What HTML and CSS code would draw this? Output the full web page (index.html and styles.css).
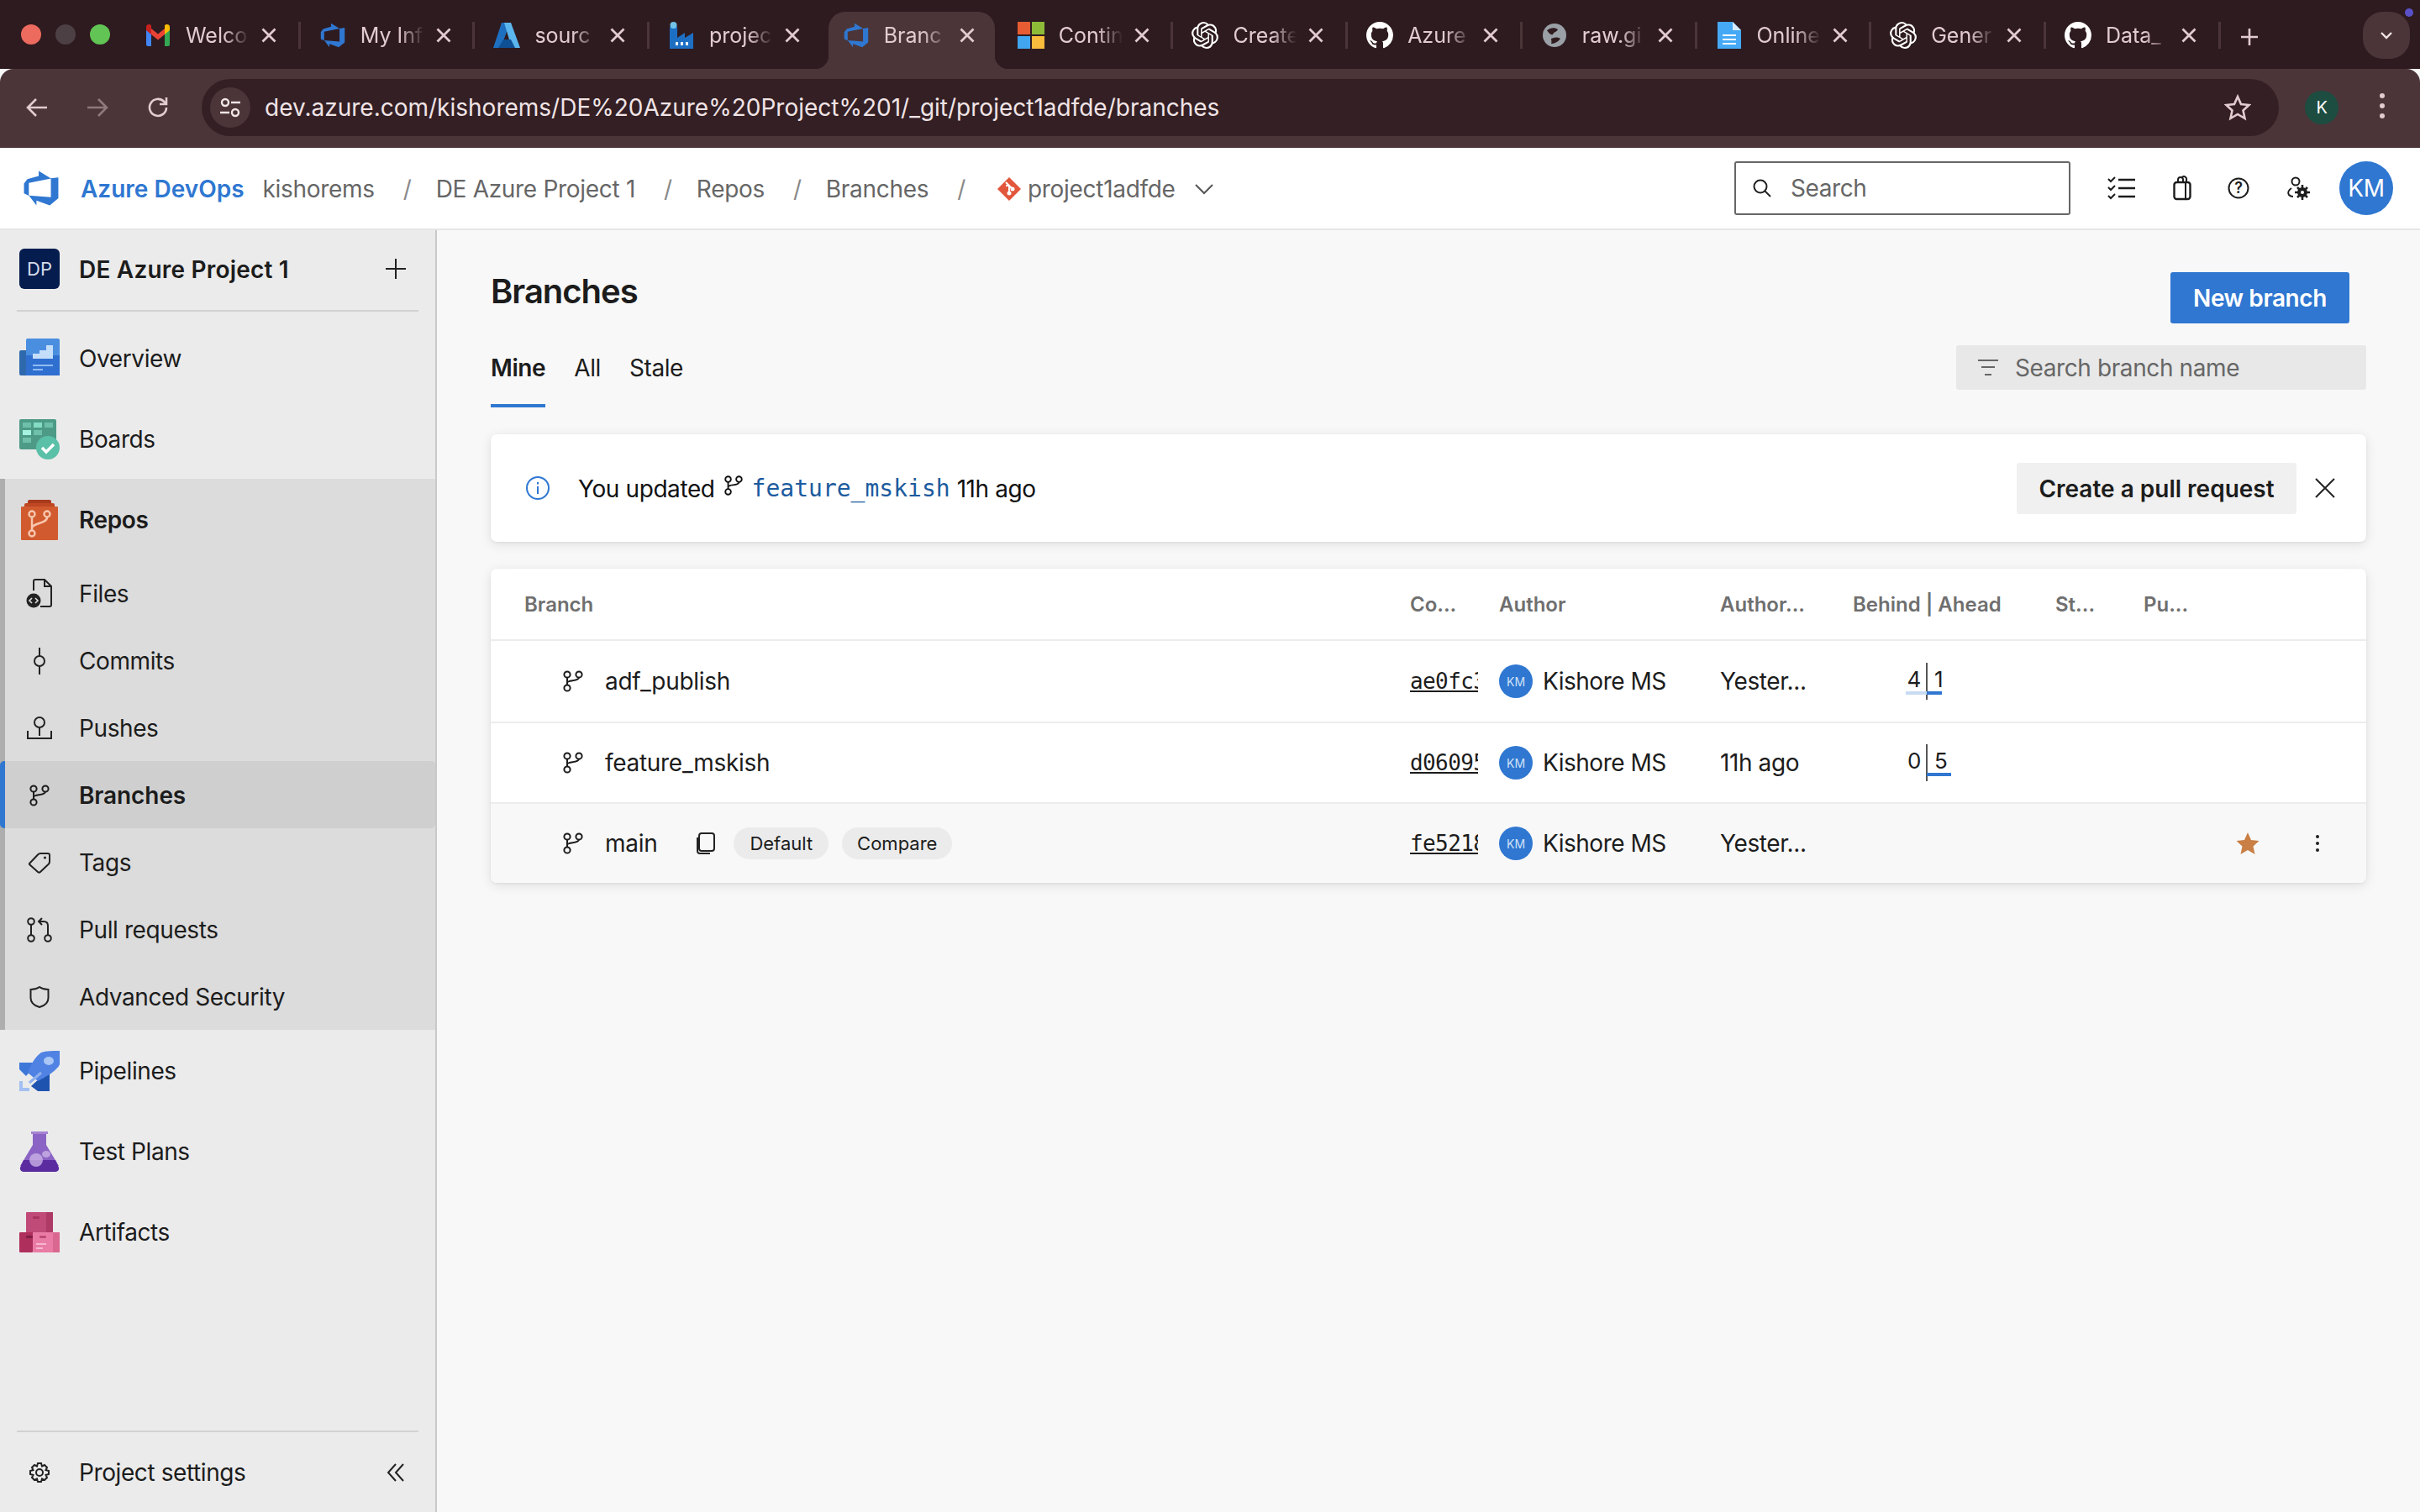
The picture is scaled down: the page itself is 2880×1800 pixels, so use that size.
FILE: index.html
```html
<!DOCTYPE html>
<html lang="en">

<head>
    <meta charset="UTF-8">
    <title>Branches</title>
    <link rel="stylesheet" href="styles.css">
</head>

<body>
    <svg class="sprite" xmlns="http://www.w3.org/2000/svg">
        <symbol id="i-ado" viewBox="0 0 18 18">
            <path fill="#2f77d1" d="M17 4v9.74l-4 3.28-6.2-2.26V17l-3.51-4.59 10.23.8V4.44zm-3.41.49L7.85 1v2.29L2.58 4.84 1 6.87v4.61l2.26 1V6.57z" />
        </symbol>
        <symbol id="i-github" viewBox="0 0 16 16">
            <path fill="#fff" d="M8 0C3.58 0 0 3.58 0 8c0 3.54 2.29 6.53 5.47 7.59.4.07.55-.17.55-.38 0-.19-.01-.82-.01-1.49-2.01.37-2.53-.49-2.69-.94-.09-.23-.48-.94-.82-1.13-.28-.15-.68-.52-.01-.53.63-.01 1.08.58 1.23.82.72 1.21 1.87.87 2.33.66.07-.52.28-.87.51-1.07-1.78-.2-3.64-.89-3.64-3.95 0-.87.31-1.59.82-2.15-.08-.2-.36-1.02.08-2.12 0 0 .67-.21 2.2.82.64-.18 1.32-.27 2-.27.68 0 1.36.09 2 .27 1.53-1.04 2.2-.82 2.2-.82.44 1.1.16 1.92.08 2.12.51.56.82 1.27.82 2.15 0 3.07-1.87 3.75-3.65 3.95.29.25.54.73.54 1.48 0 1.07-.01 1.93-.01 2.2 0 .21.15.46.55.38A8.013 8.013 0 0016 8c0-4.42-3.58-8-8-8z" />
        </symbol>
        <symbol id="i-gpt" viewBox="0 0 24 24">
            <path fill="#fff" d="M22.2819 9.8211a5.9847 5.9847 0 0 0-.5157-4.9108 6.0462 6.0462 0 0 0-6.5098-2.9A6.0651 6.0651 0 0 0 4.9807 4.1818a5.9847 5.9847 0 0 0-3.9977 2.9 6.0462 6.0462 0 0 0 .7427 7.0966 5.98 5.98 0 0 0 .511 4.9107 6.051 6.051 0 0 0 6.5146 2.9001A5.9847 5.9847 0 0 0 13.2599 24a6.0557 6.0557 0 0 0 5.7718-4.2058 5.9894 5.9894 0 0 0 3.9977-2.9001 6.0557 6.0557 0 0 0-.7475-7.0729zm-9.022 12.6081a4.4755 4.4755 0 0 1-2.8764-1.0408l.1419-.0804 4.7783-2.7582a.7948.7948 0 0 0 .3927-.6813v-6.7369l2.02 1.1686a.071.071 0 0 1 .038.052v5.5826a4.504 4.504 0 0 1-4.4945 4.4944zm-9.6607-4.1254a4.4708 4.4708 0 0 1-.5346-3.0137l.142.0852 4.783 2.7582a.7712.7712 0 0 0 .7806 0l5.8428-3.3685v2.3324a.0804.0804 0 0 1-.0332.0615L9.74 19.9502a4.4992 4.4992 0 0 1-6.1408-1.6464zM2.3408 7.8956a4.485 4.485 0 0 1 2.3655-1.9728V11.6a.7664.7664 0 0 0 .3879.6765l5.8144 3.3543-2.0201 1.1685a.0757.0757 0 0 1-.071 0l-4.8303-2.7865A4.504 4.504 0 0 1 2.3408 7.872zm16.5963 3.8558L13.1038 8.364 15.1192 7.2a.0757.0757 0 0 1 .071 0l4.8303 2.7913a4.4944 4.4944 0 0 1-.6765 8.1042v-5.6772a.79.79 0 0 0-.407-.667zm2.0107-3.0231l-.142-.0852-4.7735-2.7818a.7759.7759 0 0 0-.7854 0L9.409 9.2297V6.8974a.0662.0662 0 0 1 .0284-.0615l4.8303-2.7866a4.4992 4.4992 0 0 1 6.6802 4.66zM8.3065 12.863l-2.02-1.1638a.0804.0804 0 0 1-.038-.0567V6.0742a4.4992 4.4992 0 0 1 7.3757-3.4537l-.142.0805L8.704 5.459a.7948.7948 0 0 0-.3927.6813zm1.0976-2.3654l2.602-1.4998 2.6069 1.4998v2.9994l-2.5974 1.4997-2.6067-1.4997Z" />
        </symbol>
        <symbol id="i-close" viewBox="0 0 18 18">
            <path d="M1.500 1.500l15 15M16.500 1.500l-15 15" fill="none" stroke="#e3ccd0" stroke-width="2.800" />
        </symbol>
        <symbol id="i-branch" viewBox="0 0 26 26">
            <g fill="none" stroke="currentColor" stroke-width="2">
                <circle cx="6" cy="5" r="3.6" />
                <circle cx="20" cy="5" r="3.6" />
                <circle cx="6" cy="21" r="3.6" />
                <path d="M6 8.6v8.8M20 8.6c0 5-14 2.5-14 6.4" />
            </g>
        </symbol>
    </svg>

    <div class="tabstrip">
        <div class="lights">
            <span class="light red"></span>
            <span class="light grey"></span>
            <span class="light green"></span>
        </div>
        <div class="tab sep">
            <svg class="favicon" viewBox="0 0 32 32">
                <path fill="#4285f4" d="M2 6h6v23H4a2 2 0 0 1-2-2z" />
                <path fill="#34a853" d="M24 6h6v21a2 2 0 0 1-2 2h-4z" />
                <path fill="#ea4335" d="M8 8l8 6.500 8-6.500v7l-8 6.500-8-6.500z" />
                <path fill="#c5221f" d="M2 6c0-3 3.500-4 6-2v11l-6-5z" />
                <path fill="#fbbc04" d="M24 4c2.500-2 6-1 6 2v4l-6 5z" />
            </svg>
            <span class="tab-title">Welco</span>
            <svg class="tab-close"><use href="#i-close" /></svg>
        </div>
        <div class="tab sep">
            <svg class="favicon"><use href="#i-ado" /></svg>
            <span class="tab-title">My Inf</span>
            <svg class="tab-close"><use href="#i-close" /></svg>
        </div>
        <div class="tab sep">
            <svg class="favicon" viewBox="0 0 32 32">
                <path fill="#1e6fc0" d="M10 1h10L9 31H0z" />
                <path fill="#5cb6ee" d="M13 1h8l11 30H22z" />
                <path fill="#0f4f94" d="M12 21h9l5 10H6z" />
            </svg>
            <span class="tab-title">sourc</span>
            <svg class="tab-close"><use href="#i-close" /></svg>
        </div>
        <div class="tab">
            <svg class="favicon" viewBox="0 0 32 32">
                <path fill="#1d6fc4" d="M2 6h9v13l9-6v6l10-6v19H2z" />
                <circle cx="6.500" cy="4" r="4" fill="#6fc3e8" />
                <path fill="#fff" d="M9 24h3v4H9zM15 24h3v4h-3zM21 24h3v4h-3z" />
            </svg>
            <span class="tab-title">projec</span>
            <svg class="tab-close"><use href="#i-close" /></svg>
        </div>
        <div class="tab tab-active">
            <svg class="favicon"><use href="#i-ado" /></svg>
            <span class="tab-title">Branc</span>
            <svg class="tab-close"><use href="#i-close" /></svg>
        </div>
        <div class="tab sep">
            <svg class="favicon" viewBox="0 0 32 32">
                <path fill="#e85c33" d="M0 0h15v15H0z" />
                <path fill="#8dbb37" d="M17 0h15v15H17z" />
                <path fill="#42a5f0" d="M0 17h15v15H0z" />
                <path fill="#f9bc3c" d="M17 17h15v15H17z" />
            </svg>
            <span class="tab-title">Contin</span>
            <svg class="tab-close"><use href="#i-close" /></svg>
        </div>
        <div class="tab sep">
            <svg class="favicon"><use href="#i-gpt" /></svg>
            <span class="tab-title">Create</span>
            <svg class="tab-close"><use href="#i-close" /></svg>
        </div>
        <div class="tab sep">
            <svg class="favicon"><use href="#i-github" /></svg>
            <span class="tab-title">Azure</span>
            <svg class="tab-close"><use href="#i-close" /></svg>
        </div>
        <div class="tab sep">
            <svg class="favicon" viewBox="0 0 32 32">
                <circle cx="16" cy="16" r="14" fill="#9aa0a6" />
                <path fill="#2f1b1f" d="M7 10c4-3 9-4 13-1-1 3-5 3-6 6-3 1-5-2-7-5zM12 20c4-2 8-2 11 0-3 4-7 6-11 6 1-2 0-4 0-6z" />
            </svg>
            <span class="tab-title">raw.gi</span>
            <svg class="tab-close"><use href="#i-close" /></svg>
        </div>
        <div class="tab sep">
            <svg class="favicon" viewBox="0 0 32 32">
                <path fill="#45a9f5" d="M2 0h18l10 10v22H2z" />
                <path fill="#d6ecfc" d="M20 0l10 10H20z" />
                <path fill="#fff" d="M8 15h16v2H8zM8 20h16v2H8zM8 25h16v2H8z" />
            </svg>
            <span class="tab-title">Online</span>
            <svg class="tab-close"><use href="#i-close" /></svg>
        </div>
        <div class="tab sep">
            <svg class="favicon"><use href="#i-gpt" /></svg>
            <span class="tab-title">Gener</span>
            <svg class="tab-close"><use href="#i-close" /></svg>
        </div>
        <div class="tab sep">
            <svg class="favicon"><use href="#i-github" /></svg>
            <span class="tab-title">Data_</span>
            <svg class="tab-close"><use href="#i-close" /></svg>
        </div>
        <svg class="tab-new" viewBox="0 0 24 24">
            <path d="M12 2v20M2 12h20" stroke="#e3ccd0" stroke-width="2.600" />
        </svg>
        <div class="tab-menu">
            <svg viewBox="0 0 16 10" width="16" height="10">
                <path d="M2 2l6 6 6-6" fill="none" stroke="#f0e4e6" stroke-width="2.400" />
            </svg>
            <span class="tab-dot"></span>
        </div>
    </div>

    <div class="toolbar">
        <svg class="nav-icon" viewBox="0 0 28 28">
            <path d="M26 14H4M13 4L3 14l10 10" fill="none" stroke="#e3ccd0" stroke-width="2.600" />
        </svg>
        <svg class="nav-icon" viewBox="0 0 28 28">
            <path d="M2 14h22M15 4l10 10-10 10" fill="none" stroke="#8f7a7e" stroke-width="2.600" />
        </svg>
        <svg class="nav-icon" viewBox="0 0 28 28">
            <path d="M24 14a10 10 0 1 1-3-7.200L24 10M24 2v8h-8" fill="none" stroke="#e3ccd0" stroke-width="2.600" />
        </svg>
        <div class="omnibox">
            <span class="site-chip">
                <svg viewBox="0 0 28 28" width="28" height="28">
                    <g fill="none" stroke="#f0e4e6" stroke-width="2.400">
                        <circle cx="8" cy="8" r="4" />
                        <circle cx="20" cy="20" r="4" />
                        <path d="M15 8h11M2 20h11" />
                    </g>
                </svg>
            </span>
            <span class="url">dev.azure.com/kishorems/DE%20Azure%20Project%201/_git/project1adfde/branches</span>
            <svg class="url-star" viewBox="0 0 32 32">
                <path d="M16 3l4 9 9.500 1-7 6.500 2 9.500-8.500-5-8.500 5 2-9.500-7-6.500 9.500-1z" fill="none" stroke="#e3ccd0" stroke-width="2.600" />
            </svg>
        </div>
        <span class="profile">K</span>
        <span class="kebab-chrome"><i></i><i></i><i></i></span>
    </div>

    <header class="topbar">
        <svg class="ado-logo"><use href="#i-ado" /></svg>
        <span class="brand">Azure DevOps</span>
        <nav class="crumbs">
            <span class="crumb crumb-org">kishorems</span>
            <span class="slash">/</span>
            <span class="crumb">DE Azure Project 1</span>
            <span class="slash">/</span>
            <span class="crumb">Repos</span>
            <span class="slash">/</span>
            <span class="crumb">Branches</span>
            <span class="slash">/</span>
            <span class="crumb crumb-repo">
                <svg viewBox="0 0 28 28" width="28" height="28">
                    <path fill="#e2563b" d="M14 0l14 14-14 14L0 14z" />
                    <path d="M10 6l8 8M14 10v10M14 10l-4 0" stroke="#fff" stroke-width="2" fill="none" />
                    <circle cx="14" cy="19" r="2.500" fill="#fff" />
                    <circle cx="18" cy="14" r="2.500" fill="#fff" />
                </svg>
                project1adfde
            </span>
            <svg class="crumb-chevron" viewBox="0 0 24 14" width="24" height="14">
                <path d="M2 2l10 10L22 2" fill="none" stroke="#555" stroke-width="2" />
            </svg>
        </nav>
        <div class="global-search">
            <svg viewBox="0 0 24 24" width="24" height="24">
                <circle cx="10" cy="10" r="7.500" fill="none" stroke="#222" stroke-width="2" />
                <path d="M15.500 15.500L22 22" stroke="#222" stroke-width="2" />
            </svg>
            <span>Search</span>
        </div>
        <div class="top-icons">
            <svg viewBox="0 0 34 28" width="34" height="28">
                <g fill="none" stroke="#1c1c1c" stroke-width="2">
                    <path d="M13 4h20M13 14h20M13 24h20" stroke-width="2.400" />
                    <path d="M1 3l3 3 5-5M1 13l3 3 5-5M1 23l3 3 5-5" />
                </g>
            </svg>
            <svg viewBox="0 0 22 30" width="22" height="30">
                <g fill="none" stroke="#1c1c1c" stroke-width="2.400">
                    <rect x="1.500" y="8" width="19" height="20" rx="3" />
                    <path d="M6 8V5a3 3 0 0 1 6 0v3M11 2a3 3 0 0 1 5 3v3M15 8v20" stroke-width="2" />
                </g>
            </svg>
            <svg viewBox="0 0 26 26" width="26" height="26">
                <circle cx="13" cy="13" r="11.500" fill="none" stroke="#1c1c1c" stroke-width="2" />
                <text x="13" y="19" class="help-mark">?</text>
            </svg>
            <svg viewBox="0 0 28 28" width="28" height="28">
                <circle cx="11" cy="6" r="4.500" fill="none" stroke="#1c1c1c" stroke-width="2" />
                <path d="M6 14c-3 2-5 5-3 8 1 1 3 2 5 2" fill="none" stroke="#1c1c1c" stroke-width="2" />
                <circle cx="19" cy="19" r="6" fill="#1c1c1c" />
                <path d="M19 10v18M10 19h18M13 13l12 12M25 13L13 25" stroke="#1c1c1c" stroke-width="2.500" />
                <circle cx="19" cy="19" r="2" fill="#fff" />
            </svg>
        </div>
        <span class="me">KM</span>
    </header>

    <div class="main">
        <aside class="sidebar">
            <div class="project">
                <span class="project-badge">DP</span>
                <span class="project-name">DE Azure Project 1</span>
                <svg class="side-end" viewBox="0 0 24 24" width="24" height="24">
                    <path d="M12 0v24M0 12h24" stroke="#222" stroke-width="2" />
                </svg>
            </div>
            <div class="side-rule"></div>

            <a class="svc svc-first">
                <svg class="svc-icon" viewBox="0 0 48 48">
                    <rect x="0" y="14" width="14" height="30" rx="2" fill="#2f69ad" />
                    <rect x="8" y="0" width="40" height="44" rx="2" fill="#4a8ee0" />
                    <rect x="8" y="20" width="40" height="24" fill="#2f6fd0" />
                    <path fill="#c4defa" d="M16 24v-6h8v-4h8V8h8v16z" />
                    <path fill="#8fbcf0" d="M16 31h24v2H16zM16 36h12v2H16z" />
                </svg>
                Overview
            </a>
            <a class="svc">
                <svg class="svc-icon" viewBox="0 0 48 48">
                    <rect x="0" y="0" width="44" height="36" rx="2" fill="#4d9b87" />
                    <g fill="#6fc0ab">
                        <rect x="4" y="4" width="10" height="6" />
                        <rect x="30" y="4" width="10" height="6" />
                        <rect x="17" y="13" width="10" height="6" />
                        <rect x="4" y="22" width="10" height="6" />
                    </g>
                    <rect x="17" y="4" width="10" height="6" fill="#85dcc6" />
                    <rect x="4" y="13" width="10" height="6" fill="#a6f2e0" />
                    <circle cx="34" cy="34" r="14" fill="#5bc0a8" />
                    <path d="M27 34l5 5 9-9" fill="none" stroke="#fff" stroke-width="3.500" />
                </svg>
                Boards
            </a>

            <div class="svc-group">
                <a class="svc svc-repos">
                    <svg class="svc-icon" viewBox="0 0 48 48">
                        <rect x="10" y="0" width="28" height="8" rx="2" fill="#a93a1d" />
                        <rect x="6" y="4" width="36" height="8" rx="2" fill="#bf4722" />
                        <rect x="2" y="8" width="44" height="40" rx="1" fill="#d15b2e" />
                        <g fill="none" stroke="#f7c6ae" stroke-width="2.400">
                            <circle cx="15" cy="17" r="3.500" />
                            <circle cx="33" cy="17" r="3.500" />
                            <circle cx="15" cy="40" r="3.500" />
                            <path d="M15 21v15M33 21c0 8-18 6-18 13" />
                        </g>
                    </svg>
                    Repos
                </a>
                <a class="sub">
                    <span class="sub-icon">
                        <svg viewBox="0 0 32 36" width="32" height="36">
                            <path d="M9 14V3a2 2 0 0 1 2-2h11l8 8v22a2 2 0 0 1-2 2H17M22 1v8h8" fill="none" stroke="#222" stroke-width="2" />
                            <circle cx="9" cy="26" r="8.500" fill="#222" />
                            <path d="M7 23l-3 3 3 3M11 23l3 3-3 3" fill="none" stroke="#ddd" stroke-width="1.600" />
                        </svg>
                    </span>
                    Files
                </a>
                <a class="sub">
                    <span class="sub-icon">
                        <svg viewBox="0 0 16 36" width="16" height="36">
                            <circle cx="8" cy="18" r="6" fill="none" stroke="#222" stroke-width="2" />
                            <path d="M8 2v10M8 24v10" stroke="#222" stroke-width="2" />
                        </svg>
                    </span>
                    Commits
                </a>
                <a class="sub">
                    <span class="sub-icon">
                        <svg viewBox="0 0 30 30" width="30" height="30">
                            <circle cx="15" cy="8" r="6" fill="none" stroke="#222" stroke-width="2" />
                            <path d="M15 14v10M1 18v9h28v-9" fill="none" stroke="#222" stroke-width="2" />
                        </svg>
                    </span>
                    Pushes
                </a>
                <a class="sub sub-on">
                    <span class="sub-icon"><svg class="branch-lg"><use href="#i-branch" /></svg></span>
                    Branches
                </a>
                <a class="sub">
                    <span class="sub-icon">
                        <svg viewBox="0 0 26 26" width="26" height="26">
                            <path d="M1 14L11 3.500c1-1 2-1.500 3-1.500h9a2 2 0 0 1 2 2v8c0 1.200-.5 2-1.500 3L14 24c-1 1-2 1-3 0L1 15z" fill="none" stroke="#222" stroke-width="2" />
                            <circle cx="19.500" cy="7" r="1.600" fill="#222" />
                        </svg>
                    </span>
                    Tags
                </a>
                <a class="sub">
                    <span class="sub-icon">
                        <svg viewBox="0 0 30 30" width="30" height="30">
                            <g fill="none" stroke="#222" stroke-width="2">
                                <circle cx="5" cy="5" r="3.800" />
                                <circle cx="5" cy="25" r="3.800" />
                                <circle cx="25" cy="25" r="3.800" />
                                <path d="M5 9v12M25 21V10c0-3-2-5-5-5h-5M18 1l-4 4 4 4" />
                            </g>
                        </svg>
                    </span>
                    Pull requests
                </a>
                <a class="sub">
                    <span class="sub-icon">
                        <svg viewBox="0 0 24 28" width="24" height="28">
                            <path d="M12 2c3 2 6 3 10.500 3v10c0 6-5 9.500-10.500 11C6.500 24.500 1.500 21 1.500 15V5C6 5 9 4 12 2z" fill="none" stroke="#222" stroke-width="2" />
                        </svg>
                    </span>
                    Advanced Security
                </a>
            </div>

            <a class="svc">
                <svg class="svc-icon" viewBox="0 0 48 48">
                    <path fill="#3f77d9" d="M0 14h22L8 30 0 22z" />
                    <path fill="#1f53b0" d="M36 22v26H22l-8-6z" />
                    <path fill="#4f82e3" d="M26 2c6-2 14-2 22-2v16c-2 6-14 14-26 20L10 26C14 16 18 8 26 2z" />
                    <ellipse cx="35" cy="12" rx="6" ry="5" fill="#a9c6f5" />
                    <path fill="#a4bff2" d="M0 48V36h4v8h8v4z" />
                    <path d="M12 38l14-12" stroke="#8fb0ee" stroke-width="3" />
                </svg>
                Pipelines
            </a>
            <a class="svc">
                <svg class="svc-icon" viewBox="0 0 48 48">
                    <rect x="14" y="0" width="20" height="3" fill="#a583d2" />
                    <path fill="#8b63c4" d="M16 3h16v13l15 25H1L16 16z" />
                    <path fill="#5a2ca0" d="M5 34h38l4 9a4 4 0 0 1-4 5H5a4 4 0 0 1-4-5z" />
                    <ellipse cx="20" cy="34" rx="8" ry="8" fill="#c9b2e6" opacity="0.800" />
                    <ellipse cx="32" cy="27" rx="5" ry="4" fill="#c9b2e6" opacity="0.800" />
                </svg>
                Test Plans
            </a>
            <a class="svc">
                <svg class="svc-icon" viewBox="0 0 48 48">
                    <rect x="8" y="0" width="32" height="26" rx="1" fill="#c04b78" />
                    <rect x="32" y="0" width="8" height="26" fill="#ae3a66" />
                    <rect x="0" y="24" width="16" height="24" rx="1" fill="#ae2f5c" />
                    <rect x="16" y="24" width="32" height="24" rx="1" fill="#e97ba4" />
                    <rect x="40" y="24" width="8" height="24" fill="#d9678f" />
                    <rect x="16" y="5" width="8" height="3" rx="1" fill="#a5355f" />
                    <rect x="8" y="28" width="8" height="3" rx="1" fill="#7f1f45" />
                    <rect x="24" y="28" width="8" height="3" rx="1" fill="#bf4a77" />
                    <path fill="#f6b7cf" d="M20 37h12v2H20zM20 42h8v2h-8z" />
                </svg>
                Artifacts
            </a>

            <div class="side-foot">
                <div class="side-rule"></div>
                <div class="settings">
                    <span class="sub-icon">
                        <svg viewBox="0 0 26 26" width="26" height="26">
                            <g fill="none" stroke="#222" stroke-width="2">
                                <circle cx="13" cy="13" r="4" />
                                <path d="M11 2h4l1 3.500 3-1.500 3 3-1.500 3L24 11v4l-3.500 1 1.500 3-3 3-3-1.500L15 24h-4l-1-3.500L7 22l-3-3 1.500-3L2 15v-4l3.500-1L4 7l3-3 3 1.500z" />
                            </g>
                        </svg>
                    </span>
                    <span>Project settings</span>
                    <svg class="side-end" viewBox="0 0 22 24" width="22" height="24">
                        <path d="M11 2L2 12l9 10M20 2l-9 10 9 10" fill="none" stroke="#222" stroke-width="2" />
                    </svg>
                </div>
            </div>
        </aside>

        <main class="content">
            <div class="title-row">
                <h1>Branches</h1>
                <button class="btn-primary">New branch</button>
            </div>
            <div class="pivot-row">
                <div class="pivots">
                    <span class="pivot pivot-on">Mine</span>
                    <span class="pivot">All</span>
                    <span class="pivot">Stale</span>
                </div>
                <div class="filter">
                    <svg viewBox="0 0 24 20" width="24" height="20">
                        <path d="M0 1h24M4 9h16M8 18h8" stroke="#666" stroke-width="2" />
                    </svg>
                    <span>Search branch name</span>
                </div>
            </div>

            <section class="card banner">
                <svg viewBox="0 0 28 28" width="28" height="28">
                    <circle cx="14" cy="14" r="13" fill="none" stroke="#2f77d1" stroke-width="2" />
                    <path d="M14 12v9M14 7v2.500" stroke="#2f77d1" stroke-width="2" />
                </svg>
                <p class="banner-text">
                    You updated
                    <svg class="branch-up"><use href="#i-branch" /></svg>
                    <span class="mono-link">feature_mskish</span>
                    11h ago
                </p>
                <button class="btn-light">Create a pull request</button>
                <svg class="banner-close" viewBox="0 0 24 24" width="24" height="24">
                    <path d="M1 1l22 22M23 1L1 23" stroke="#222" stroke-width="2" />
                </svg>
            </section>

            <section class="card table-card">
                <table class="branches">
                    <colgroup>
                        <col class="c-branch">
                        <col class="c-commit">
                        <col class="c-author">
                        <col class="c-date">
                        <col class="c-ahead">
                        <col class="c-state">
                        <col class="c-pr">
                    </colgroup>
                    <thead>
                        <tr>
                            <th class="th-branch">Branch</th>
                            <th>Co...</th>
                            <th>Author</th>
                            <th>Author...</th>
                            <th>Behind | Ahead</th>
                            <th>St...</th>
                            <th>Pu...</th>
                        </tr>
                    </thead>
                    <tbody>
                        <tr class="row-one">
                            <td>
                                <div class="name-cell">
                                    <svg class="branch-lg"><use href="#i-branch" /></svg>
                                    <span>adf_publish</span>
                                </div>
                            </td>
                            <td><span class="commit">ae0fc3b</span></td>
                            <td>
                                <div class="author"><span class="mini-avatar">KM</span>Kishore MS</div>
                            </td>
                            <td>Yester...</td>
                            <td>
                                <div class="ab">
                                    <div class="ab-left"><span class="ab-n">4</span><i class="ab-bar ab-behind ab-w25"></i></div>
                                    <div class="ab-right"><span class="ab-n">1</span><i class="ab-bar ab-w18"></i></div>
                                </div>
                            </td>
                            <td></td>
                            <td></td>
                        </tr>
                        <tr>
                            <td>
                                <div class="name-cell">
                                    <svg class="branch-lg"><use href="#i-branch" /></svg>
                                    <span>feature_mskish</span>
                                </div>
                            </td>
                            <td><span class="commit">d06095a</span></td>
                            <td>
                                <div class="author"><span class="mini-avatar">KM</span>Kishore MS</div>
                            </td>
                            <td>11h ago</td>
                            <td>
                                <div class="ab">
                                    <div class="ab-left"><span class="ab-n">0</span></div>
                                    <div class="ab-right"><span class="ab-n">5</span><i class="ab-bar ab-w29"></i></div>
                                </div>
                            </td>
                            <td></td>
                            <td></td>
                        </tr>
                        <tr class="row-hover">
                            <td>
                                <div class="name-cell">
                                    <svg class="branch-lg"><use href="#i-branch" /></svg>
                                    <span>main</span>
                                    <svg class="copy-icon" viewBox="0 0 22 26" width="22" height="26">
                                        <path d="M6 1h12a3 3 0 0 1 3 3v15a3 3 0 0 1-3 3H6a3 3 0 0 1-3-3V4a3 3 0 0 1 3-3z" fill="none" stroke="#222" stroke-width="2" />
                                        <path d="M1 6v16a3 3 0 0 0 3 3h12" fill="none" stroke="#222" stroke-width="2" />
                                    </svg>
                                    <span class="pill pill-default">Default</span>
                                    <span class="pill">Compare</span>
                                </div>
                            </td>
                            <td><span class="commit">fe5218c</span></td>
                            <td>
                                <div class="author"><span class="mini-avatar">KM</span>Kishore MS</div>
                            </td>
                            <td>Yester...</td>
                            <td></td>
                            <td></td>
                            <td>
                                <div class="row-actions">
                                    <svg viewBox="0 0 28 28" width="28" height="28">
                                        <path fill="#c97f45" d="M14 1l4 9 9.500 1-7 6.500 2 9.500-8.500-5-8.500 5 2-9.500-7-6.500 9.500-1z" />
                                    </svg>
                                    <span class="kebab"><i></i><i></i><i></i></span>
                                </div>
                            </td>
                        </tr>
                    </tbody>
                </table>
            </section>
        </main>
    </div>
</body>

</html>
```

FILE: styles.css
```css
* {
    box-sizing: border-box;
}

html,
body {
    margin: 0;
    height: 100%;
}

body {
    width: 2880px;
    height: 1800px;
    overflow: hidden;
    display: flex;
    flex-direction: column;
    font-family: Inter, "Noto Sans", sans-serif;
    font-size: 28px;
    color: #1c1c1c;
    background: #f8f8f8;
    letter-spacing: -0.4px;
}

.sprite {
    display: none;
}

/* browser chrome */
.tabstrip {
    height: 82px;
    flex: none;
    display: flex;
    align-items: flex-end;
    background: #2e1b20;
    position: relative;
}

.lights {
    width: 150px;
    height: 82px;
    display: flex;
    gap: 17px;
    padding: 29px 0 0 25px;
    flex: none;
}

.light {
    width: 24px;
    height: 24px;
    border-radius: 50%;
}

.red {
    background: #ec6a5e;
}

.grey {
    background: #4d4044;
}

.green {
    background: #61c454;
}

.tab {
    width: 207.700px;
    height: 68px;
    flex: none;
    display: flex;
    align-items: flex-start;
    padding: 12px 0 0 22px;
    position: relative;
}

.tab.sep::after {
    content: "";
    position: absolute;
    right: 0;
    top: 12px;
    width: 3px;
    height: 32px;
    background: #4b3539;
}

.tab-active {
    background: #4b3539;
    border-radius: 20px 20px 0 0;
    margin: 0 5px;
    width: 198px;
    padding-left: 17px;
}

.tab-active::before,
.tab-active::after {
    content: "";
    position: absolute;
    bottom: 0;
    width: 16px;
    height: 16px;
}

.tab-active::before {
    left: -16px;
    background: radial-gradient(circle at 0 0, transparent 16px, #4b3539 16.500px);
}

.tab-active::after {
    right: -16px;
    background: radial-gradient(circle at 100% 0, transparent 16px, #4b3539 16.500px);
}

.favicon {
    width: 32px;
    height: 32px;
    flex: none;
}

.tab-title {
    width: 76px;
    margin-left: 17px;
    font-size: 25px;
    line-height: 32px;
    color: #e3ccd0;
    white-space: nowrap;
    flex: none;
    letter-spacing: 0;
    -webkit-mask-image: linear-gradient(to right, #000 60%, transparent 100%);
    mask-image: linear-gradient(to right, #000 60%, transparent 100%);
}

.tab-close {
    width: 18px;
    height: 18px;
    margin: 7px 0 0 14px;
    flex: none;
}

.tab-new {
    width: 24px;
    height: 24px;
    margin: 0 0 26px 22px;
    flex: none;
}

.tab-menu {
    width: 56px;
    height: 56px;
    border-radius: 24px;
    background: #4b3539;
    display: flex;
    align-items: center;
    justify-content: center;
    position: absolute;
    left: 2812px;
    top: 14px;
}

.tab-dot {
    position: absolute;
    top: -4px;
    right: -4px;
    width: 10px;
    height: 10px;
    border-radius: 50%;
    background: #5a50c8;
}

.toolbar {
    height: 94px;
    flex: none;
    display: flex;
    align-items: flex-start;
    padding: 12px 0 0 30px;
    background: #4b3539;
    border-radius: 16px 16px 0 0;
}

.nav-icon {
    width: 28px;
    height: 28px;
    margin: 20px 44px 0 0;
    flex: none;
}

.omnibox {
    width: 2472px;
    height: 68px;
    margin-left: -6px;
    border-radius: 34px;
    background: #341f24;
    display: flex;
    align-items: center;
    padding: 0 33px 0 10px;
    flex: none;
}

.site-chip {
    width: 48px;
    height: 48px;
    border-radius: 50%;
    background: #4b3539;
    display: flex;
    align-items: center;
    justify-content: center;
    flex: none;
}

.url {
    margin-left: 17px;
    color: #f0e4e6;
    letter-spacing: 0;
    flex: 1;
    white-space: nowrap;
}

.url-star {
    width: 32px;
    height: 32px;
    flex: none;
}

.profile {
    width: 40px;
    height: 40px;
    margin: 14px 0 0 31px;
    border-radius: 50%;
    background: #1d4d40;
    color: #fff;
    font-size: 20px;
    display: flex;
    align-items: center;
    justify-content: center;
    flex: none;
}

.kebab-chrome {
    margin: 17px 0 0 49px;
    display: flex;
    flex-direction: column;
    gap: 6px;
}

.kebab-chrome i {
    width: 6px;
    height: 6px;
    border-radius: 50%;
    background: #e3ccd0;
}

/* azure devops header */
.topbar {
    height: 98px;
    flex: none;
    display: flex;
    align-items: center;
    padding: 0 32px 0 26px;
    background: #fff;
    border-bottom: 2px solid #e6e6e6;
}

.ado-logo {
    width: 46px;
    height: 46px;
    flex: none;
}

.brand {
    margin-left: 24px;
    padding-top: 2px;
    font-weight: 600;
    color: #2f77d1;
    white-space: nowrap;
    letter-spacing: 0;
}

.crumbs {
    display: flex;
    align-items: center;
    flex: 1;
    margin-left: 22px;
    padding-top: 2px;
    color: #666;
    white-space: nowrap;
    letter-spacing: -0.3px;
}

.slash {
    color: #8a8a8a;
    margin: 0 29px 0 34px;
}

.crumb-repo {
    display: flex;
    align-items: center;
    gap: 8px;
    margin-left: 9px;
}

.crumb-chevron {
    margin-left: 22px;
}

.global-search {
    width: 400px;
    height: 64px;
    border: 2px solid #666;
    border-radius: 3px;
    display: flex;
    align-items: center;
    gap: 22px;
    padding-left: 19px;
    color: #666;
    flex: none;
}

.top-icons {
    width: 320px;
    display: flex;
    align-items: center;
    justify-content: space-between;
    padding: 0 35px 0 44px;
    flex: none;
}

.help-mark {
    font-size: 18px;
    font-weight: 600;
    text-anchor: middle;
    fill: #1c1c1c;
}

.me {
    width: 64px;
    height: 64px;
    border-radius: 50%;
    background: #2f77d1;
    color: #fff;
    display: flex;
    align-items: center;
    justify-content: center;
    flex: none;
}

/* layout */
.main {
    flex: 1;
    display: flex;
    min-height: 0;
}

.sidebar {
    width: 520px;
    flex: none;
    display: flex;
    flex-direction: column;
    background: #ebebeb;
    border-right: 2px solid #c9c9c9;
}

.project {
    height: 95px;
    flex: none;
    display: flex;
    align-items: center;
    padding: 0 35px 3px 23px;
}

.project-badge {
    width: 48px;
    height: 48px;
    border-radius: 6px;
    background: #051c4f;
    color: #d5dcea;
    font-size: 22px;
    display: flex;
    align-items: center;
    justify-content: center;
    flex: none;
    letter-spacing: 0;
}

.project-name {
    margin-left: 23px;
    padding-top: 2px;
    font-weight: 600;
    flex: 1;
    white-space: nowrap;
    letter-spacing: 0.2px;
}

.side-rule {
    height: 2px;
    margin: 0 20px;
    background: #d2d2d2;
    flex: none;
}

.side-end {
    flex: none;
}

.svc {
    height: 96px;
    flex: none;
    display: flex;
    align-items: center;
    gap: 23px;
    padding: 2px 0 0 23px;
}

.svc-first {
    margin-top: 7px;
}

.svc-icon {
    width: 48px;
    height: 48px;
    flex: none;
}

.svc-group {
    background: #dcdcdc;
    border-left: 6px solid #aeaeae;
    flex: none;
}

.svc-repos {
    padding-left: 17px;
    font-weight: 600;
}

.sub {
    height: 80px;
    display: flex;
    align-items: center;
    gap: 23px;
    padding: 2px 0 0 17px;
}

.sub-icon {
    width: 48px;
    flex: none;
    display: flex;
    align-items: center;
    justify-content: center;
}

.sub-on {
    margin-left: -6px;
    background: #cfcfcf;
    border-left: 6px solid #2f77d1;
    border-radius: 5px;
    font-weight: 600;
    letter-spacing: -0.1px;
}

.side-foot {
    margin-top: auto;
    height: 97px;
    flex: none;
}

.settings {
    height: 95px;
    display: flex;
    align-items: center;
    gap: 23px;
    padding: 0 36px 0 23px;
}

.settings span:nth-child(2) {
    flex: 1;
}

/* page content */
.content {
    flex: 1;
    padding: 0 64px;
    min-width: 0;
}

.title-row {
    height: 137px;
    display: flex;
    justify-content: space-between;
    align-items: flex-start;
    padding-right: 20px;
}

h1 {
    margin: 46px 0 0;
    font-size: 40px;
    line-height: 54px;
    font-weight: 600;
    letter-spacing: -1px;
}

.btn-primary {
    width: 213px;
    height: 61px;
    margin-top: 50px;
    border: 0;
    border-radius: 3px;
    background: #2f77d1;
    color: #fff;
    font: 600 28px Inter, sans-serif;
    letter-spacing: -0.4px;
}

.pivot-row {
    height: 106px;
    display: flex;
    justify-content: space-between;
    align-items: flex-start;
}

.pivots {
    display: flex;
    gap: 34px;
}

.pivot {
    height: 74px;
    line-height: 54px;
}

.pivot-on {
    font-weight: 600;
    border-bottom: 4px solid #2f77d1;
}

.filter {
    width: 488px;
    height: 53px;
    background: #e8e8e8;
    border-radius: 3px;
    display: flex;
    align-items: center;
    gap: 20px;
    padding-left: 26px;
    color: #666;
}

.card {
    background: #fff;
    border-radius: 7px;
    box-shadow: 0 3px 14px rgba(0, 0, 0, 0.10), 0 1px 3px rgba(0, 0, 0, 0.06);
}

.banner {
    height: 128px;
    display: flex;
    align-items: center;
    padding: 0 37px 0 42px;
}

.banner-text {
    margin: 0 0 0 34px;
    padding-top: 1px;
    flex: 1;
    color: #111;
    display: flex;
    align-items: center;
    white-space: nowrap;
}

.branch-up {
    width: 24px;
    height: 24px;
    margin: -8px 10px 0 10px;
}

.mono-link {
    font-family: "DejaVu Sans Mono", monospace;
    color: #1c5b9e;
    letter-spacing: 0;
    margin-right: 8px;
}

.btn-light {
    width: 333px;
    height: 61px;
    padding-top: 2px;
    border: 0;
    border-radius: 3px;
    background: #f0f0f0;
    color: #1c1c1c;
    font: 600 28px Inter, sans-serif;
    letter-spacing: 0;
}

.banner-close {
    margin-left: 22px;
}

.table-card {
    margin-top: 32px;
    height: 374px;
    overflow: hidden;
}

.branches {
    width: 100%;
    height: 374px;
    table-layout: fixed;
    border-collapse: collapse;
}

.c-branch {
    width: 1094px;
}

.c-commit {
    width: 106px;
}

.c-author {
    width: 263px;
}

.c-date {
    width: 158px;
}

.c-ahead {
    width: 241px;
}

.c-state {
    width: 105px;
}

.branches th {
    height: 85px;
    padding: 0;
    text-align: left;
    font-size: 24px;
    font-weight: 600;
    color: #6f6f6f;
    border-bottom: 2px solid #ececec;
    white-space: nowrap;
    letter-spacing: 0;
}

.branches th.th-branch {
    padding-left: 40px;
}

.branches td {
    height: 96px;
    padding: 0;
    white-space: nowrap;
    border-bottom: 2px solid #ececec;
}

.branches .row-one td {
    height: 98px;
}

.branches tbody tr:last-child td {
    height: 95px;
    border-bottom: 0;
}

.row-hover td {
    background: #f8f8f8;
}

.name-cell {
    display: flex;
    align-items: center;
    padding-left: 85px;
    letter-spacing: -0.3px;
}

.branch-lg {
    width: 26px;
    height: 26px;
    flex: none;
}

.name-cell span:nth-child(2) {
    margin-left: 25px;
}

.copy-icon {
    margin: 0 0 0 47px;
    flex: none;
}

.pill {
    height: 38px;
    padding: 0 18px;
    margin-left: 16px;
    border-radius: 19px;
    background: #ebebeb;
    font-size: 22px;
    line-height: 38px;
    letter-spacing: 0;
}

.pill-default {
    margin-left: 22px;
    padding: 0 19px;
}

.commit {
    display: block;
    width: 81px;
    overflow: hidden;
    font-family: "DejaVu Sans Mono", monospace;
    font-size: 26px;
    text-decoration: underline;
    letter-spacing: -0.6px;
}

.author {
    display: flex;
    align-items: center;
    gap: 12px;
    letter-spacing: -0.5px;
}

.mini-avatar {
    width: 40px;
    height: 40px;
    border-radius: 50%;
    background: #2f77d1;
    color: #cfe1f6;
    font-size: 14px;
    display: flex;
    align-items: center;
    justify-content: center;
    flex: none;
    letter-spacing: 0;
}

.ab {
    display: flex;
    height: 44px;
    margin-left: 63px;
}

.ab-left {
    width: 26px;
    display: flex;
    flex-direction: column;
    align-items: flex-end;
    padding: 4px 6px 0 0;
    margin-right: -1px;
    border-right: 2px solid #555;
    position: relative;
}

.ab-right {
    padding: 4px 0 0 9px;
    position: relative;
}

.ab-n {
    display: block;
    font-size: 26px;
    line-height: 32px;
}

.ab-bar {
    position: absolute;
    bottom: 6px;
    left: 0;
    height: 4px;
    background: #2f77d1;
}

.ab-behind {
    background: #c7dcf2;
}

.ab-w25 {
    width: 25px;
}

.ab-w18 {
    width: 18px;
}

.ab-w29 {
    width: 29px;
}

.row-actions {
    display: flex;
    align-items: center;
    justify-content: flex-end;
    padding-right: 56px;
    gap: 67px;
}

.kebab {
    display: flex;
    flex-direction: column;
    gap: 4px;
}

.kebab i {
    width: 4px;
    height: 4px;
    border-radius: 50%;
    background: #222;
}
```
